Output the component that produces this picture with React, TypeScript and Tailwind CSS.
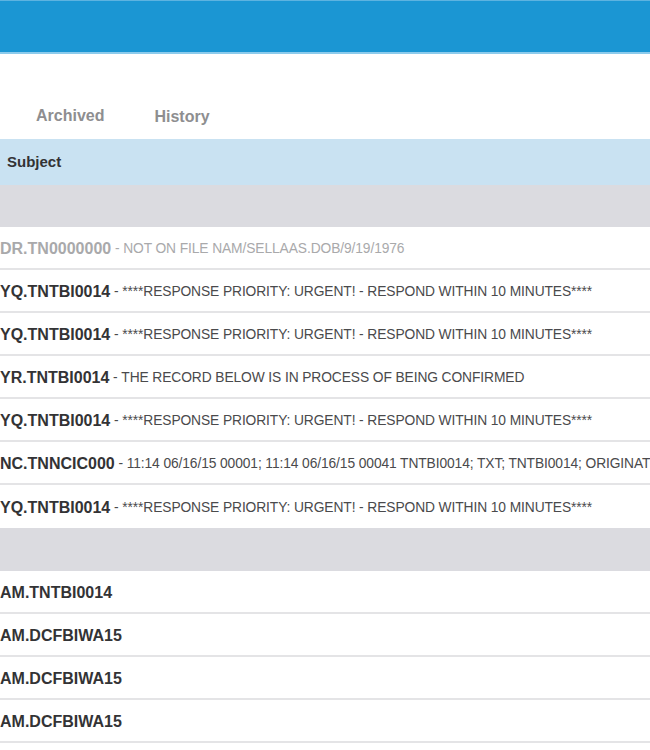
const font = { fontFamily: '"Liberation Sans", Arial, Helvetica, sans-serif' };

type Row = { id: string; text?: string; muted?: boolean };

const firstGroup: Row[] = [
  { id: "DR.TN0000000", text: "NOT ON FILE NAM/SELLAAS.DOB/9/19/1976", muted: true },
  { id: "YQ.TNTBI0014", text: "****RESPONSE PRIORITY: URGENT! - RESPOND WITHIN 10 MINUTES****" },
  { id: "YQ.TNTBI0014", text: "****RESPONSE PRIORITY: URGENT! - RESPOND WITHIN 10 MINUTES****" },
  { id: "YR.TNTBI0014", text: "THE RECORD BELOW IS IN PROCESS OF BEING CONFIRMED" },
  { id: "YQ.TNTBI0014", text: "****RESPONSE PRIORITY: URGENT! - RESPOND WITHIN 10 MINUTES****" },
  {
    id: "NC.TNNCIC000",
    text: "11:14 06/16/15 00001; 11:14 06/16/15 00041 TNTBI0014; TXT; TNTBI0014; ORIGINATING AGENCY",
  },
  { id: "YQ.TNTBI0014", text: "****RESPONSE PRIORITY: URGENT! - RESPOND WITHIN 10 MINUTES****" },
];

const secondGroup: Row[] = [
  { id: "AM.TNTBI0014" },
  { id: "AM.DCFBIWA15" },
  { id: "AM.DCFBIWA15" },
  { id: "AM.DCFBIWA15" },
];

function MessageRow({ row, last }: { row: Row; last?: boolean }) {
  return (
    <div
      className={`h-[43px] flex items-center pt-[3px] whitespace-nowrap overflow-hidden bg-white ${
        last ? "" : "border-b-2 border-[#e4e4e6]"
      }`}
    >
      <span
        className={`text-[16px] font-bold ${row.muted ? "text-[#a9a9ab]" : "text-[#333335]"}`}
      >
        {row.id}
      </span>
      {row.text && (
        <span
          className={`text-[13.8px] tracking-[-0.1px] ${
            row.muted ? "text-[#a9a9ab]" : "text-[#4a4a4c]"
          }`}
        >
          &nbsp;-&nbsp;{row.text}
        </span>
      )}
    </div>
  );
}

export default function App() {
  return (
    <div className="w-[650px] h-[750px] bg-white overflow-hidden" style={font}>
      <div className="h-[54px] bg-[#1b96d3] border-t border-[#5db3e0] border-b-2 border-b-[#8ccbec]" />

      <div className="h-[85px] flex items-end pb-[11px]">
        <span className="ml-[36px] text-[16px] font-bold text-[#8e8e90]">Archived</span>
        <span className="ml-[50px] mb-[-1px] text-[16px] font-bold text-[#8e8e90]">History</span>
      </div>

      <div className="h-[46px] bg-[#c9e2f2] flex items-center pl-[7px] pt-[1px]">
        <span className="text-[15px] font-bold text-[#333335]">Subject</span>
      </div>

      <div className="h-[42px] bg-[#dbdbe0]" />
      {firstGroup.map((row, i) => (
        <MessageRow key={i} row={row} last={i === firstGroup.length - 1} />
      ))}

      <div className="h-[43px] bg-[#dbdbe0]" />
      {secondGroup.map((row, i) => (
        <MessageRow key={i} row={row} />
      ))}
    </div>
  );
}
